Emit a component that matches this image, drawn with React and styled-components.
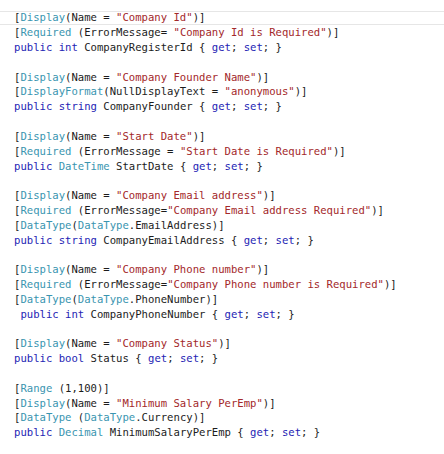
import styled, { createGlobalStyle } from 'styled-components';

const GlobalStyle = createGlobalStyle`
  html, body {
    margin: 0;
    padding: 0;
    background: #ffffff;
  }
`;

const SOURCE = [
  '[Display(Name = "Company Id")]',
  '[Required (ErrorMessage= "Company Id is Required")]',
  'public int CompanyRegisterId { get; set; }',
  '',
  '[Display(Name = "Company Founder Name")]',
  '[DisplayFormat(NullDisplayText = "anonymous")]',
  'public string CompanyFounder { get; set; }',
  '',
  '[Display(Name = "Start Date")]',
  '[Required (ErrorMessage = "Start Date is Required")]',
  'public DateTime StartDate { get; set; }',
  '',
  '[Display(Name = "Company Email address")]',
  '[Required (ErrorMessage="Company Email address Required")]',
  '[DataType(DataType.EmailAddress)]',
  'public string CompanyEmailAddress { get; set; }',
  '',
  '[Display(Name = "Company Phone number")]',
  '[Required (ErrorMessage="Company Phone number is Required")]',
  '[DataType(DataType.PhoneNumber)]',
  ' public int CompanyPhoneNumber { get; set; }',
  '',
  '[Display(Name = "Company Status")]',
  'public bool Status { get; set; }',
  '',
  '[Range (1,100)]',
  '[Display(Name = "Minimum Salary PerEmp")]',
  '[DataType (DataType.Currency)]',
  'public Decimal MinimumSalaryPerEmp { get; set; }',
];

const KEYWORDS = ['public', 'int', 'string', 'bool', 'get', 'set'];
const TYPES = ['Display', 'Required', 'DisplayFormat', 'DataType', 'DateTime', 'Decimal', 'Range'];

// split a line into strings, words and the rest, then colour each piece
const tokenize = (line) => {
  const parts = line.match(/"[^"]*"|[A-Za-z]+|[^"A-Za-z]+/g) || [];
  return parts.map((text) => {
    if (text.startsWith('"')) return { kind: 'string', text };
    if (KEYWORDS.includes(text)) return { kind: 'keyword', text };
    if (TYPES.includes(text)) return { kind: 'type', text };
    return { kind: 'plain', text };
  });
};

const COLORS = {
  plain: '#1c1c1c',
  keyword: '#2424b4',
  type: '#3a95b0',
  string: '#a3282a',
};

const App = () => {
  return (
    <>
      <GlobalStyle />
      <Editor>
        {SOURCE.map((line, i) => (
          <Line key={i} $current={i === 0}>
            {line === ''
              ? '\u00a0'
              : tokenize(line).map((tok, j) => (
                  <Token key={j} $kind={tok.kind}>
                    {tok.text}
                  </Token>
                ))}
          </Line>
        ))}
      </Editor>
    </>
  );
};

const Editor = styled.div`
  display: flex;
  flex-direction: column;
  padding-top: 10.4px;
  font-family: 'DejaVu Sans Mono', 'Liberation Mono', monospace;
  font-size: 10.6px;
  line-height: 14.82px;
`;

const Line = styled.div`
  position: relative;
  height: 14.82px;
  padding-left: 14px;
  white-space: pre;

  ${({ $current }) =>
    $current &&
    `
    &::after {
      content: '';
      position: absolute;
      left: 0;
      right: 0;
      top: 0.6px;
      bottom: 0.6px;
      border-top: 1px solid #e6e6e6;
      border-bottom: 1px solid #e6e6e6;
    }
  `}
`;

const Token = styled.span`
  color: ${({ $kind }) => COLORS[$kind]};
`;

export default App;
